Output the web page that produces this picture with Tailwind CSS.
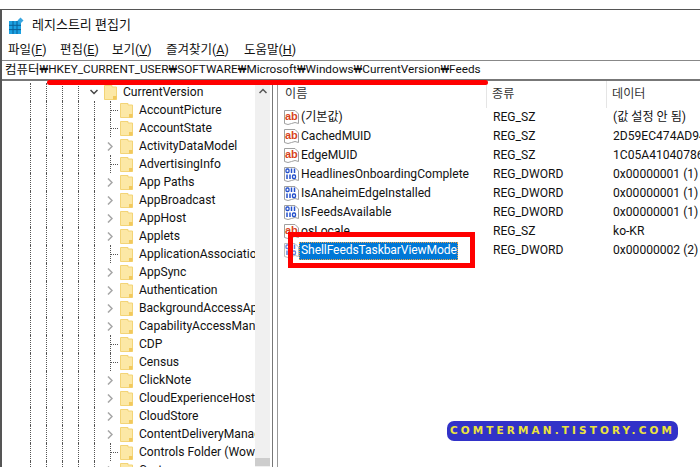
<!DOCTYPE html>
<html lang="ko">
<head>
    <meta charset="UTF-8">
    <meta name="viewport" content="width=device-width, initial-scale=1.0">
    <title>레지스트리 편집기</title>
    <script src="https://cdn.jsdelivr.net/npm/@tailwindcss/browser@4"></script>
</head>
<body class="relative w-[700px] h-[467px] overflow-hidden bg-white text-[#111] font-['Roboto','Noto_Sans_CJK_KR',sans-serif]">
    <svg class="hidden">
        <symbol id="folder" viewBox="0 0 13 15">
            <path d="M0.5 0.5H8V2H12.5V14.500H0.5Z" fill="#fce8a6" stroke="#f3d477"/>
            <path d="M9 14.500V11H12.500V14.500Z" fill="#f2c95c"/>
        </symbol>
        <symbol id="ab" viewBox="0 0 15 15">
            <path d="M0.5 0.5H11L14.500 4V13.500Q11 11.500 7.500 13.500T0.5 13.500Z" fill="#fff" stroke="#a0a0a0"/>
            <text x="1" y="9.500" font-size="11" font-weight="700" fill="#d8431c" font-family="Liberation Sans">ab</text>
        </symbol>
        <symbol id="bin" viewBox="0 0 15 15">
            <path d="M0.5 0.5H11L14.500 4V13.500Q11 11.500 7.500 13.500T0.5 13.500Z" fill="#fff" stroke="#a0a0a0"/>
            <rect x="2" y="2" width="3" height="3.500" rx="1" fill="none" stroke="#2450cc" stroke-width="1.300"/>
            <path d="M7.500 1.500V6M10.500 1.500V6M3 7.500V12M6 7.500V12" stroke="#2450cc" stroke-width="1.500"/>
            <rect x="8.500" y="8" width="3" height="3.500" rx="1" fill="none" stroke="#2450cc" stroke-width="1.300"/>
        </symbol>
    </svg>

    <div class="flex flex-col h-[458px] mt-[9px] border-t border-l-2 border-[#555]">
        <div class="flex items-center h-[30px] pl-[7px] gap-2">
            <svg class="w-[15px] h-[17px]" viewBox="0 0 15 17">
                <rect x="0" y="4" width="12" height="13" fill="#1ba1e2"/>
                <path d="M4 4v13M8 4v13M0 8.300h12M0 12.600h12" stroke="#0a5f96" stroke-width="1"/>
                <path d="M11.500 0.500l3 3-3 3-3-3z" fill="#3aa6e0"/>
            </svg>
            <span class="text-[13px]">레지스트리 편집기</span>
        </div>
        <nav class="flex items-center h-[20px] pl-[6px] text-[12.500px]">
            <span class="w-[52px]">파일(<u>F</u>)</span>
            <span class="w-[52px]">편집(<u>E</u>)</span>
            <span class="w-[54px]">보기(<u>V</u>)</span>
            <span class="w-[78px]">즐겨찾기(<u>A</u>)</span>
            <span>도움말(<u>H</u>)</span>
        </nav>
        <div class="flex items-center h-[21px] pl-[3px] border-t border-b-2 border-t-[#888] border-b-[#777] text-[11.750px] whitespace-nowrap"><span class="text-[12.500px]">컴퓨터</span>₩HKEY_CURRENT_USER₩SOFTWARE₩Microsoft₩Windows₩CurrentVersion₩Feeds</div>
        <main class="flex flex-1 min-h-0">
            <section class="flex w-[271px] shrink-0 border-r border-[#777]">
                <div id="tree" class="w-[253px] shrink-0 overflow-hidden pt-[2px] text-[12.100px]"></div>
                <div class="relative flex-1 mr-[2px] bg-[#f0f0f0]">
                    <svg class="mt-[7px] ml-[4px] w-[8px] h-[6px]" viewBox="0 0 8 6"><path d="M0.500 5L4 1.500 7.500 5" fill="none" stroke="#555" stroke-width="1.500"/></svg>
                    <div class="absolute left-0 right-0 top-[377px] h-[8px] bg-[#cdcdcd]"></div>
                </div>
            </section>
            <section class="flex-1 ml-[4px] border-l border-[#999] text-[12.100px]">
                <div class="flex h-[27px] items-center text-[#333]">
                    <span class="w-[209px] h-full pl-[7px] flex items-center border-r border-[#e5e5e5]">이름</span>
                    <span class="w-[120px] h-full pl-[5px] flex items-center border-r border-[#e5e5e5]">종류</span>
                    <span class="pl-[5px]">데이터</span>
                </div>
                <div id="list"></div>
            </section>
        </main>
    </div>

    <!-- annotations on top of the screenshot -->
    <div class="absolute left-[47px] top-[80px] w-[441px] h-[5px] rounded-full bg-[#f00] blur-[0.5px]"></div>
    <div class="absolute left-[288px] top-[232px] w-[187px] h-[36px] border-[5px] border-[#f00]"></div>
    <div class="absolute left-[447px] top-[421px] w-[231px] h-[20px] flex items-center justify-center rounded-[7px] bg-[#3232c8] text-[#ece43c] text-[10.500px] font-bold tracking-[3.100px] font-['DejaVu_Sans',sans-serif]">COMTERMAN.TISTORY.COM</div>

    <script>
        // name, 1 = has a chevron, 0 = leaf with dotted stub
        const keys = [
            ['AccountPicture', 0], ['AccountState', 0], ['ActivityDataModel', 1], ['AdvertisingInfo', 0],
            ['App Paths', 1], ['AppBroadcast', 1], ['AppHost', 1], ['Applets', 1],
            ['ApplicationAssociationToasts', 0], ['AppSync', 1], ['Authentication', 1],
            ['BackgroundAccessApplications', 1], ['CapabilityAccessManager', 1], ['CDP', 0], ['Census', 0],
            ['ClickNote', 1], ['CloudExperienceHost', 1], ['CloudStore', 1], ['ContentDeliveryManager', 1],
            ['Controls Folder (Wow64)', 0], ['Cortana', 1]
        ];
        const guides = n => '<span class="w-4 h-full shrink-0 border-l border-dotted border-[#555]"></span>'.repeat(n);
        const folder = '<svg class="w-[13px] h-[15px] shrink-0"><use href="#folder"/></svg>';

        let tree = `<div class="flex items-center h-[18px] pl-[28px] whitespace-nowrap">${guides(4)}
            <span class="w-[10px] h-full shrink-0 flex items-center"><svg class="-ml-[4px] w-[8px] h-[6px]" viewBox="0 0 8 6"><path d="M0.500 1L4 4.500 7.500 1" fill="none" stroke="#444" stroke-width="1.500"/></svg></span>
            ${folder}<span class="ml-[6px]">CurrentVersion</span></div>`;
        for (const [name, open] of keys) {
            const toggle = open
                ? '<span class="w-[10px] h-full shrink-0 flex items-center"><svg class="-ml-[3px] w-[6px] h-[9px]" viewBox="0 0 6 9"><path d="M1 0.500L5 4.500 1 8.500" fill="none" stroke="#a6a6a6" stroke-width="1.500"/></svg></span>'
                : '<span class="w-[10px] h-full shrink-0 border-l border-dotted border-[#555] flex items-center"><span class="w-[7px] border-t border-dotted border-[#555]"></span></span>';
            tree += `<div class="flex items-center h-[18px] pl-[28px] whitespace-nowrap">${guides(5)}${toggle}${folder}<span class="ml-[6px]">${name}</span></div>`;
        }
        document.getElementById('tree').innerHTML = tree;

        const values = [
            ['ab', '(기본값)', 'REG_SZ', '(값 설정 안 됨)'],
            ['ab', 'CachedMUID', 'REG_SZ', '2D59EC474AD94FB1'],
            ['ab', 'EdgeMUID', 'REG_SZ', '1C05A41040786A12'],
            ['bin', 'HeadlinesOnboardingComplete', 'REG_DWORD', '0x00000001 (1)'],
            ['bin', 'IsAnaheimEdgeInstalled', 'REG_DWORD', '0x00000001 (1)'],
            ['bin', 'IsFeedsAvailable', 'REG_DWORD', '0x00000001 (1)'],
            ['ab', 'osLocale', 'REG_SZ', 'ko-KR'],
            ['bin', 'ShellFeedsTaskbarViewMode', 'REG_DWORD', '0x00000002 (2)']
        ];
        document.getElementById('list').innerHTML = values.map(([icon, name, type, data], i) => {
            const selected = i === values.length - 1;
            const label = selected
                ? `<span class="w-[159px] px-[2px] h-[18px] flex items-center bg-[#0078d7] text-white tracking-[-0.1px] outline-1 outline-dotted outline-[#f0a040] -outline-offset-1">${name}</span>`
                : `<span class="px-[2px]">${name}</span>`;
            return `<div class="flex items-center h-[19px] whitespace-nowrap">
                <div class="w-[210px] shrink-0 flex items-center pl-[6px]"><svg class="w-[15px] h-[15px] shrink-0 ${selected ? 'opacity-70' : ''}"><use href="#${icon}"/></svg>${label}</div>
                <div class="w-[120px] shrink-0 pl-[5px]">${type}</div>
                <div class="pl-[5px]">${data}</div>
            </div>`;
        }).join('');
    </script>
</body>
</html>
